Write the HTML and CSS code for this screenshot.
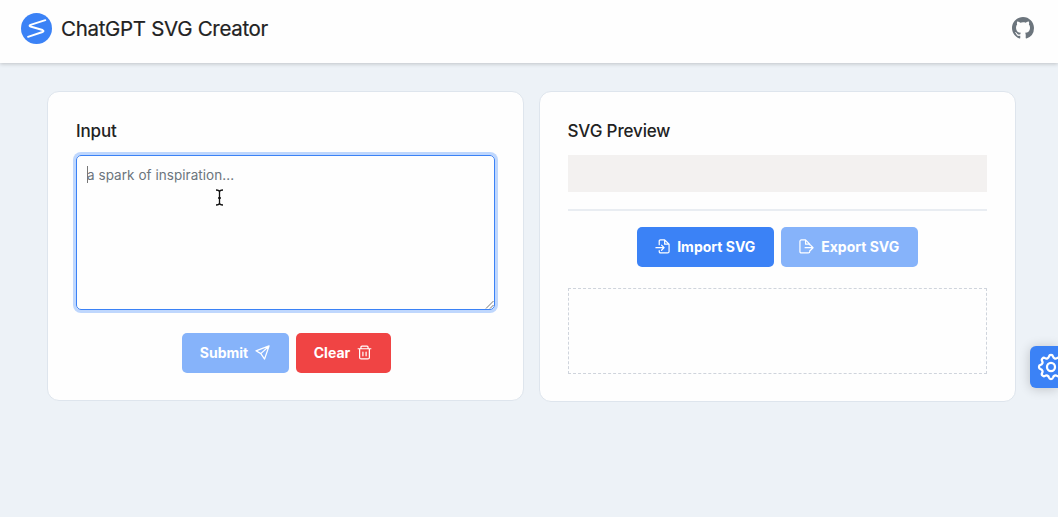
FILE: index.html
```html
<!DOCTYPE html>
<html lang="en">
<head>
<meta charset="utf-8">
<title>ChatGPT SVG Creator</title>
<link rel="stylesheet" href="styles.css">
</head>
<body>
<header class="topbar">
  <div class="brand">
    <svg class="logo" viewBox="0 0 31 31"><circle cx="15.5" cy="15.5" r="15.5" fill="#3b82f6"/><path d="M24.3 7.2 9.5 11.8Q7.6 12.8 9.5 13.5L21.5 17Q23.6 18.2 21.5 19L7 23.8" fill="none" stroke="#fff" stroke-width="1.9" stroke-linecap="round" stroke-linejoin="round"/></svg>
    <h1 class="title">ChatGPT SVG Creator</h1>
  </div>
  <a class="github" aria-label="GitHub"><svg viewBox="0 0 16 16" fill="#6c757d"><path d="M8 0C3.58 0 0 3.58 0 8c0 3.54 2.29 6.53 5.47 7.59.4.07.55-.17.55-.38 0-.19-.01-.82-.01-1.49-2.01.37-2.53-.49-2.69-.94-.09-.23-.48-.94-.82-1.13-.28-.15-.68-.52-.01-.53.63-.01 1.08.58 1.23.82.72 1.21 1.87.87 2.33.66.07-.52.28-.87.51-1.07-1.78-.2-3.64-.89-3.64-3.95 0-.87.31-1.59.82-2.15-.08-.2-.36-1.02.08-2.12 0 0 .67-.21 2.2.82A7.6 7.6 0 0 1 8 3.86c.68 0 1.36.09 2 .27 1.53-1.04 2.2-.82 2.2-.82.44 1.1.16 1.92.08 2.12.51.56.82 1.27.82 2.15 0 3.07-1.87 3.75-3.65 3.95.29.25.54.73.54 1.48 0 1.07-.01 1.93-.01 2.2 0 .21.15.46.55.38A8.01 8.01 0 0 0 16 8c0-4.42-3.58-8-8-8z"/></svg></a>
</header>
<main class="panels">
  <section class="card input-card">
    <h2 class="heading">Input</h2>
    <div class="field">
      <i class="caret"></i><span class="placeholder">a spark of inspiration...</span>
      <svg class="grip" viewBox="0 0 9 9" fill="none" stroke="#777" stroke-width="1"><path d="M1 8.5 8.5 1M5 8.5 8.5 5"/></svg>
      <svg class="pointer" viewBox="0 0 9 17" fill="none" stroke="#111" stroke-width="1.3"><path d="M1 1Q4.5 1 4.5 3V14Q4.5 16 1 16M8 1Q4.5 1 4.5 3M4.5 14Q4.5 16 8 16M3 9H6"/></svg>
    </div>
    <div class="actions">
      <button class="btn submit muted">Submit<svg class="icon" viewBox="0 0 16 16"><path d="M15 1 1 6.2 6.2 9.2 10.2 15ZM15 1 6.2 9.2"/></svg></button>
      <button class="btn clear danger">Clear<svg class="icon" viewBox="0 0 16 16"><path d="M1.2 4H14.8M4.2 4V2.3Q4.2 1.2 5.3 1.2H10.7Q11.8 1.2 11.8 2.3V4M2.8 4V13.2Q2.8 14.8 4.4 14.8H11.6Q13.2 14.8 13.2 13.2V4M6.3 7.5V11.5M9.7 7.5V11.5"/></svg></button>
    </div>
  </section>
  <section class="card preview-card">
    <h2 class="heading">SVG Preview</h2>
    <div class="preview"></div>
    <div class="rule"></div>
    <div class="actions transfers">
      <button class="btn primary"><svg class="icon" viewBox="0 0 16 16"><path d="M4.5 6V2.4Q4.5 1 5.9 1H10.3L15 5.5V13.2Q15 14.8 13.4 14.8H6Q4.5 14.8 4.5 13.3V12.5M10.3 1V5.5H15M1 9.2H9.5M7 6.5 9.7 9.2 7 12"/></svg>Import SVG</button>
      <button class="btn muted"><svg class="icon" viewBox="0 0 16 16"><path d="M11.5 12.5V13.2Q11.5 14.8 9.9 14.8H2.6Q1 14.8 1 13.2V2.6Q1 1 2.6 1H7L11.5 5.5V6.3M7 1V5.5H11.5M6.5 9.3H15M12.3 6.5 15 9.3 12.3 12"/></svg>Export SVG</button>
    </div>
    <div class="dropzone"></div>
  </section>
</main>
<aside class="settings"><svg viewBox="0 0 16 16" fill="none" stroke="#fff" stroke-width="1.3" stroke-linejoin="round"><circle cx="8" cy="8" r="2.3"/><path d="M13.99 6.84A1.2 1.2 0 0 1 13.99 9.16A1.5 1.5 0 0 0 13.06 11.41A1.2 1.2 0 0 1 11.41 13.06A1.5 1.5 0 0 0 9.16 13.99A1.2 1.2 0 0 1 6.84 13.99A1.5 1.5 0 0 0 4.59 13.06A1.2 1.2 0 0 1 2.94 11.41A1.5 1.5 0 0 0 2.01 9.16A1.2 1.2 0 0 1 2.01 6.84A1.5 1.5 0 0 0 2.94 4.59A1.2 1.2 0 0 1 4.59 2.94A1.5 1.5 0 0 0 6.84 2.01A1.2 1.2 0 0 1 9.16 2.01A1.5 1.5 0 0 0 11.41 2.94A1.2 1.2 0 0 1 13.06 4.59A1.5 1.5 0 0 0 13.99 6.84Z"/></svg></aside>
</body>
</html>
```
FILE: styles.css
```css
* { box-sizing: border-box; }
body { margin: 0; height: 517px; overflow: hidden; background: #edf2f7; color: #222; font-family: Inter, "Liberation Sans", sans-serif; }
svg { display: block; }
.topbar { height: 63px; padding: 0 24px 7px 21px; display: flex; align-items: center; justify-content: space-between; background: #fefefe; box-shadow: 0 1px 4px rgba(0,0,0,.2); }
.brand { display: flex; align-items: center; gap: 9px; }
.logo { width: 31px; height: 31px; }
.title { margin: 1px 0 0; font-size: 20.5px; line-height: 28px; font-weight: 400; letter-spacing: -.31px; -webkit-text-stroke: .2px #222; }
.github svg { width: 22px; height: 22px; }
.panels { display: grid; grid-template-columns: 477px 477px; gap: 15px; padding: 28px 42px 0 47px; align-items: start; }
.card { height: 311px; padding: 28px; background: #fefefe; border: 1px solid #dee5ed; border-radius: 12px; }
.input-card { height: 310px; }
.preview-card { padding-left: 27.5px; }
.heading { margin: 0 0 13px; font-size: 17px; line-height: 22px; font-weight: 500; letter-spacing: -.14px; }
.field { position: relative; height: 155px; padding: 10px 11px 10px 10px; border: 1px solid #3b82f6; border-radius: 5px; box-shadow: 0 0 0 3px #bfd7fd; display: flex; align-items: flex-start; }
.caret { width: 1px; height: 17px; background: #777; }
.placeholder { margin-left: -1px; font-size: 13.5px; line-height: 18px; letter-spacing: .05px; color: #6c757d; }
.grip { position: absolute; right: 0; bottom: 0; width: 9px; height: 9px; }
.pointer { position: absolute; left: 138px; top: 33px; width: 9px; height: 17px; }
.actions { display: flex; justify-content: center; gap: 7px; margin-top: 23px; }
.input-card .actions { padding-left: 1px; }
.btn { height: 39.5px; padding: 0 18px; border: 0; border-radius: 5px; display: flex; align-items: center; justify-content: center; gap: 7px; color: #fff; font: 700 14px/20px Inter, sans-serif; white-space: nowrap; width: 137px; }
.submit { width: 107px; }
.clear { width: 95px; }
.icon { flex: none; width: 15px; height: 15px; fill: none; stroke: #fff; stroke-width: 1.3; stroke-linecap: round; stroke-linejoin: round; }
.primary { background: #3b82f6; }
.muted { background: #86b3fa; }
.danger { background: #f04444; }
.preview { height: 37px; background: #f3f1f0; }
.rule { height: 2px; margin-top: 17px; background: #e9edf2; }
.transfers { margin-top: 16px; }
.dropzone { height: 86px; margin-top: 21px; border: 1px dashed #cfd4dc; }
.settings { position: absolute; right: 0; top: 346px; width: 28px; height: 42px; padding: 7px 0 0 7px; overflow: hidden; background: #3b82f6; border-radius: 6px 0 0 6px; box-shadow: 0 1px 12px rgba(0,0,0,.2); }
.settings svg { width: 28px; height: 28px; }
```
